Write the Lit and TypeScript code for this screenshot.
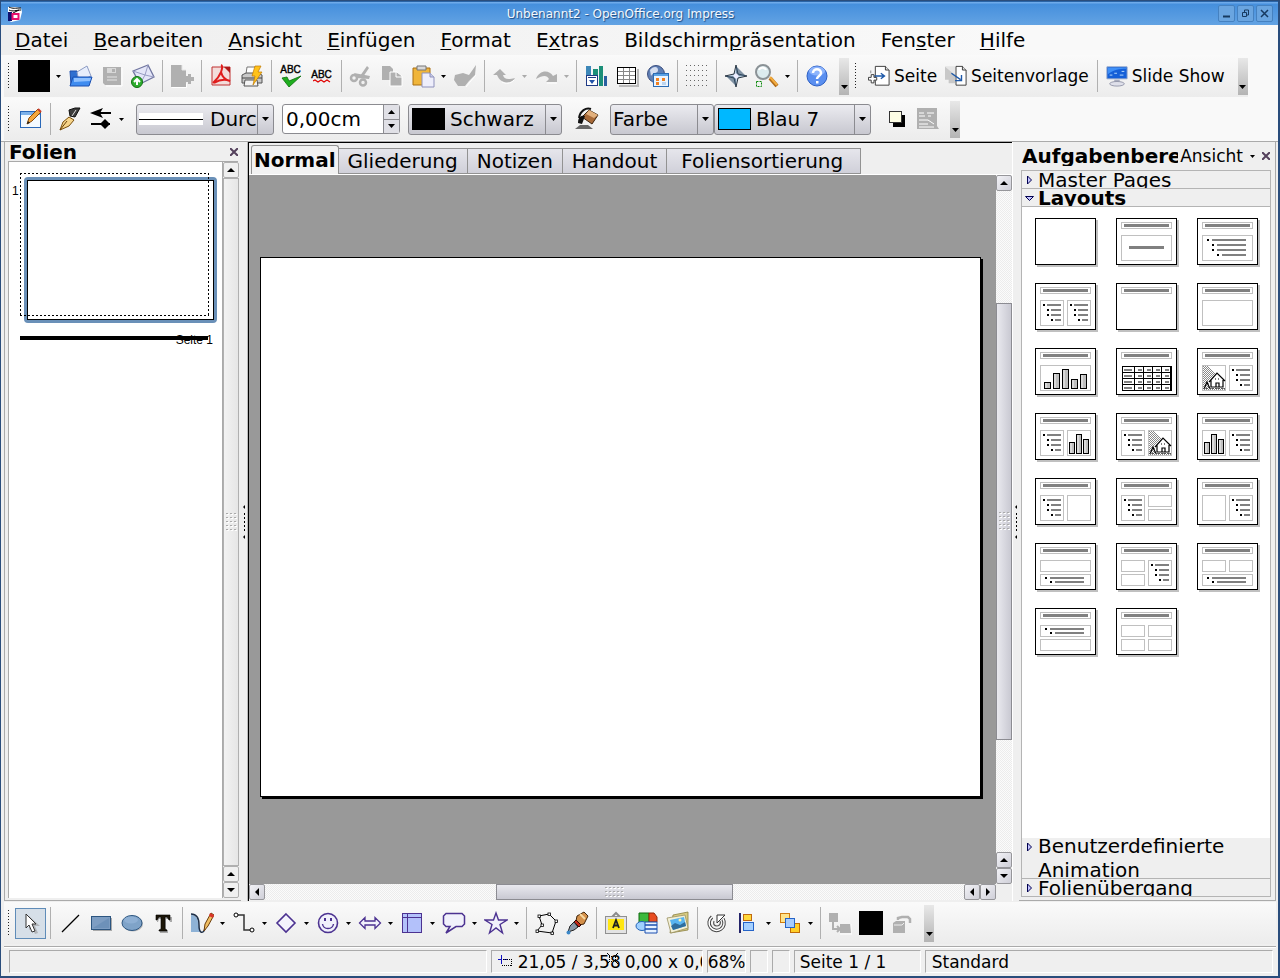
import { LitElement, html, svg, css, nothing, TemplateResult } from "lit";
import { customElement, property } from "lit/decorators.js";
import { classMap } from "lit/directives/class-map.js";

/* ---------- icon artwork, 24 x 24 grid ---------- */
const GREY = "#b0b0b0";
const VIOLET = "#4c3291";
const icons: Record<string, TemplateResult> = {
  open: svg`<path d="M1 7h7l2 2h6v12H2z" fill="#2f6fd0" stroke="#1d4fae"/><path d="M8 8l10-6 4 10-12 6z" fill="#e8eefc" stroke="#8d9cc4"/><path d="M4 13h19l-3 9H1z" fill="#3f8cf0" stroke="#1b4fb0"/><path d="M5 14h17l-1 3-16 1z" fill="#8fc0ff"/>`,
  save: svg`<path d="M3 3h18v18H5l-2-2z" fill="${GREY}"/><path d="M7 13h10M7 16h10" stroke="#e4e4e4" stroke-width="1"/><path d="M7 4h9v5H7z" fill="#d8d8d8"/><path d="M12 5h3v3h-3z" fill="${GREY}"/><path d="M22 4v18H6" fill="none" stroke="#fff"/>`,
  mail: svg`<path d="M2 7L17 1l6 12-14 7z" fill="#e4e6f8" stroke="#70759f" stroke-width="1.300"/><path d="M2 7l12 4 3-10M23 13l-9-2-5 9" fill="none" stroke="#9a9ec4"/><circle cx="6" cy="18" r="5.500" fill="#2fae2f" stroke="#137013"/><path d="M6 21v-6M3 18l3-3 3 3" fill="none" stroke="#fff" stroke-width="2"/>`,
  exportDoc: svg`<path d="M1 1h11v5h4v6h2v-2h3v3h3v4h-3v3h-3v-2h-2v5H1z" fill="${GREY}"/><path d="M12 1v5h4" fill="none" stroke="#e6e6e6"/><path d="M1.500 23.500h15v-4" fill="none" stroke="#fff"/>`,
  pdf: svg`<path d="M3 3h18v18H3z" fill="#f3dcda" stroke="#c03030"/><path d="M15 3h6v6z" fill="#b01818"/><path d="M12 1c3 1 0 11-8 18M12 8c1 4 4 8 9 9-5-2-11-1-16 2" fill="none" stroke="#e01c1c" stroke-width="2"/>`,
  print: svg`<path d="M7 3h10l-1 7H6z" fill="#fff" stroke="#777"/><path d="M2 11l4-2h12l4 2v8H2z" fill="#c9c9c9" stroke="#555"/><path d="M2 14h20" stroke="#444"/><path d="M5 16h12l1 6H4z" fill="#f5f5f5" stroke="#555"/><path d="M15 2h6l-3 6h4l-9 13 2-9h-3z" fill="#ffc21a" stroke="#c07800" stroke-width=".7"/>`,
  cut: svg`<path d="M18 2l2 2-6 9-3-1zM5 9l16 3-1 3-12-1z" fill="${GREY}"/><circle cx="5" cy="14" r="3" fill="none" stroke="${GREY}" stroke-width="2.500"/><circle cx="14" cy="18.500" r="3" fill="none" stroke="${GREY}" stroke-width="2.500"/>`,
  copy: svg`<path d="M2 2h8l3 3v11H2z" fill="${GREY}"/><path d="M10 8h7l5 4v10H10z" fill="${GREY}" stroke="#fff"/><path d="M16 8v5h6" fill="none" stroke="#fff"/>`,
  paste: svg`<path d="M2 4h17v17H2z" fill="#f0b53a" stroke="#a96f12"/><path d="M6 2h9v4H6z" fill="#d8d8d8" stroke="#777"/><path d="M11 9h8l4 4v10H11z" fill="#eeeefb" stroke="#8f92bc"/><path d="M19 9v4h4" fill="#c9cbe8" stroke="#8f92bc"/>`,
  brush: svg`<path d="M23 1l-1 10-6 6-4 5H5l-4-6 1-5 8-2 6 2z" fill="${GREY}"/><path d="M23 11l-6 7-4 5" fill="none" stroke="#fff"/>`,
  undo: svg`<path d="M1 11l7-6 6 6h-3c1 4 4 5 12 3-3 6-14 7-18-3z" fill="${GREY}"/><path d="M22 16c-3 4-9 4-12 2" fill="none" stroke="#fff"/>`,
  redo: svg`<path d="M23 18h-11l3-3c-2-4-6-4-13 0 3-9 13-10 17-3l4-2z" fill="${GREY}"/><path d="M23 19H13" stroke="#fff"/>`,
  chart: svg`<path d="M2 2h5v15H2z" fill="#3d87b8"/><path d="M9 5h5v9H9zM15 2h4v20h-4z" fill="#1b8f78"/><path d="M20 12h3v10h-3z" fill="#2a5fa0"/><rect x="2.500" y="11.500" width="11" height="10" fill="#fff" stroke="#1f3a86"/><path d="M4 13.500h8" stroke="#1f3a86"/><path d="M5 16h6l-3 4z" fill="#2353a8"/>`,
  table: svg`<path d="M4 22h19V5" fill="none" stroke="#bbb" stroke-width="2"/><rect x="2.500" y="3.500" width="18" height="16" fill="#fff" stroke="#000"/><path d="M3 7.500h17M3 11.500h17M3 15.500h17M8.500 4v15M14.500 4v15" stroke="#888"/>`,
  globe: svg`<circle cx="10" cy="10" r="8.500" fill="#5f7fb4" stroke="#3d5080"/><path d="M4 6c3-4 8-4 8 0s-5 2-7 6z" fill="#d5def0"/><rect x="7.500" y="9.500" width="15" height="13" fill="#eaf4ff" stroke="#2b6cb4"/><path d="M8 10h14v2H8z" fill="#5ba2e4"/><path d="M10 14h3v3h-3zM16 14h3v3h-3zM10 18h3v3h-3z" fill="#f08020"/><path d="M16 18h4v3h-4z" fill="#bcd4ee"/>`,
  dots: svg`${[1, 6, 11, 16, 21].map((y) => svg`<path d="M1 ${y + 0.5}h23" stroke="#666" stroke-dasharray="1 3"/>`)}`,
  compass: svg`<path d="M12 1l2 9 9 2-9 2-2 9-2-9-9-2 9-2z" fill="#c2d5e6" stroke="#28333f"/><path d="M12 2v10h10zM12 22V12H2z" fill="#34526e" opacity=".6"/><path d="M12 9l3 3-3 3-3-3z" fill="#eef"/>`,
  zoom: svg`<circle cx="8" cy="8" r="7" fill="#dcebee" stroke="#8b9296" stroke-width="2"/><path d="M4 6c1-3 6-3 7 0" stroke="#fff" stroke-width="2" fill="none"/><path d="M15 14l7 8" stroke="#b06a18" stroke-width="4"/><path d="M15 13l7 8" stroke="#f3ac3e" stroke-width="2"/><path d="M1.500 17.500h5v5h-5z" fill="none" stroke="#0a8a0a" stroke-dasharray="2 1"/>`,
  help: svg`<circle cx="12" cy="12" r="10" fill="#5a8ff0" stroke="#2c5fc4"/><ellipse cx="12" cy="7" rx="8" ry="4.500" fill="#8db4fc"/><path d="M8 9c0-5 8-5 8 0 0 3-4 3-4 6" fill="none" stroke="#fff" stroke-width="2.500"/><path d="M11 17h2.500v2.500H11z" fill="#fff"/>`,
  page: svg`<path d="M8 1.500h11l4 4V22H8z" fill="#fff" stroke="#333"/><path d="M19 1.500v4h4" fill="#ddd" stroke="#333"/><path d="M7 12h10M14 9l4 3-4 3" fill="none" stroke="#1d58a8" stroke-width="1.500"/><path d="M0.500 13.500h3v-3h3v3h3v3h-3v3h-3v-3h-3z" fill="#fff" stroke="#333"/><path d="M3 6v3" stroke="#888"/>`,
  pageMaster: svg`<path d="M0 2h11v18H4V16H0z" fill="#c8c8c8"/><path d="M0 2l11 9V2z" fill="#e6e6e6"/><path d="M12 1.500h7l4 4V22H12z" fill="#fff" stroke="#333"/><path d="M19 1.500v4h4" fill="#ddd" stroke="#333"/><path d="M7 9l10 7M18 11v6h-7" fill="none" stroke="#1d58a8" stroke-width="1.500"/>`,
  screen: svg`<path d="M1 2h22v13H1z" fill="#1560d8" stroke="#8aa0c8"/><path d="M2 10c6-5 13-6 20-6v-1H2z" fill="#3f90f8"/><path d="M4 11h3M9 9h3M15 11h4M17 7h3" stroke="#bfe0ff"/><path d="M9 16h6v3H9z" fill="#a8acbe"/><ellipse cx="12" cy="20.500" rx="8" ry="2.500" fill="#dfe0ea" stroke="#9295a8"/>`,
  edit: svg`<rect x="1.500" y="4.500" width="20" height="16" fill="#f4faff" stroke="#2a68b8"/><path d="M2 5h19v3H2z" fill="#7db2ea"/><path d="M8 17l2-6 9-9 3 3-9 9z" fill="#f5a83c" stroke="#8a4a08"/><path d="M8 17l1-3 2 2z" fill="#222"/><path d="M19 2l3 3" stroke="#c83c2c" stroke-width="2"/>`,
  pen: svg`<path d="M11 3l6-2h5l-5 9-5-1z" fill="#3c3c3c" stroke="#111"/><path d="M18 3l-4 6" stroke="#ddd"/><path d="M11 10l5 3-5 6-9 4 3-8z" fill="#f6d48a" stroke="#7a500e"/><path d="M2 23l7-9" stroke="#6a4208"/>`,
  ends: svg`<path d="M8 6h14M2 17h19" stroke="#000" stroke-width="2"/><path d="M1 6l13-5-3 5 3 5z" fill="#000"/><path d="M11 17l5-5 5 5-5 5z" fill="#000"/>`,
  bucket: svg`<path d="M7 10l7-7 9 5-6 9z" fill="#a86a38" stroke="#3a220c"/><path d="M14 3l9 5-4 3-8-4z" fill="#e2b07c"/><path d="M4 11c1-7 7-11 12-9" fill="none" stroke="#111" stroke-width="2"/><path d="M3 16c0-6 3-8 7-7l-3 8z" fill="#111"/><path d="M0 22l5-4h8l5 4z" fill="#666"/>`,
  shadow: svg`<path d="M8 8h12v12H8z" fill="#000"/><rect x="4.500" y="4.500" width="12" height="11" fill="#fdfde4" stroke="#333"/>`,
  effects: svg`<path d="M1 1h20v18l2 3H1z" fill="${GREY}"/><path d="M3 6h5M11 6h7M3 9h6M12 9h3M3 13h9l6 4M3 17h9M3 20h15" stroke="#fff" fill="none"/>`,
  pointer: svg`<path d="M8 3v14l3-3 3 7 3-1-3-7h5z" transform="translate(2 2)" fill="#999" opacity=".6"/><path d="M7 3v14l3-3 3 7 3-1-3-7h4z" fill="#fff" stroke="#333"/>`,
  line: svg`<path d="M4 21L21 4" stroke="#000" stroke-width="1.200"/>`,
  rect: svg`<path d="M4 7h19v13H4z" fill="#aaa"/><rect x="2.500" y="5.500" width="19" height="13" fill="#7d9dc2" stroke="#2c5580"/><path d="M4 17L20 7v10z" fill="#6288b2" opacity=".6"/>`,
  ellipse: svg`<ellipse cx="13" cy="13" rx="10" ry="7.500" fill="#bbb"/><ellipse cx="12" cy="12" rx="10" ry="7.500" fill="#7fa3c8" stroke="#2c5580"/><ellipse cx="11" cy="9" rx="7" ry="3.500" fill="#8fb0d4"/>`,
  textTool: svg`<path d="M6 6h15v5h-2l-1-3h-3v11l2 1v2H9v-2l2-1V8H8l-1 3H6z" fill="#aaa"/><path d="M5 4h14v5h-1l-2-3h-2v12l2 1v1H8v-1l2-1V6H8L6 9H5z" fill="#1c1608" stroke="#000" stroke-width=".6"/>`,
  curve: svg`<path d="M1 4c7 0 7 7 8 12l1 5H1z" fill="#8eb2d6"/><path d="M1 3c6 0 8 5 8 11 0 9 4 9 6 4" fill="none" stroke="#1e2f48" stroke-width="1.500"/><path d="M14 20l1-7 6-11 3 2-6 11z" fill="#f0be62" stroke="#6b3d0c"/><path d="M20 2l4 2-1 3-4-2z" fill="#d8352a"/>`,
  connector: svg`<path d="M6 4h6v15h6" fill="none" stroke="#333" stroke-width="1.500"/><circle cx="4" cy="4" r="2" fill="#fff" stroke="#000"/><circle cx="20" cy="19" r="2" fill="#fff" stroke="#000"/>`,
  diamond: svg`<path d="M12 3l9 9-9 9-9-9z" fill="#f4f4fc" stroke="${VIOLET}" stroke-width="1.600"/>`,
  smiley: svg`<circle cx="12" cy="12" r="9.500" fill="#f1f1fb" stroke="${VIOLET}" stroke-width="1.600"/><path d="M8 7h2v3H8zM14 7h2v3h-2z" fill="${VIOLET}"/><path d="M6.500 13c1 6 10 6 11 0" fill="none" stroke="${VIOLET}" stroke-width="1.400"/>`,
  blockArrow: svg`<path d="M1.500 12L7 6.500V10h10V6.500l5.500 5.500-5.500 5.500V14H7v3.500z" fill="#f1f1fb" stroke="${VIOLET}" stroke-width="1.300"/>`,
  flow: svg`<rect x="2.500" y="2.500" width="19" height="19" fill="#b3c1fa" stroke="${VIOLET}"/><path d="M7.500 2v20M2 6.500h20" stroke="${VIOLET}"/>`,
  callout: svg`<path d="M4 2.500h16l2.500 2.500v8L20 15.500h-6L4 22l4-6.500H4L1.500 13V5z" fill="#f1f1fb" stroke="${VIOLET}" stroke-width="1.500"/>`,
  star: svg`<path d="M12 2l2.500 7H23l-7 4.500L18.500 22 12 17l-6.500 5L8 13.500 1 9h8.500z" fill="#f1f1fb" stroke="${VIOLET}" stroke-width="1.400"/>`,
  points: svg`<path d="M5 5l10-2 7 7-4 12-15-2 5-6z" fill="none" stroke="#000"/>${[[5, 5], [15, 3], [22, 10], [18, 22], [3, 20], [8, 14]].map(([x, y]) => svg`<rect x="${x - 1}" y="${y - 1}" width="2.500" height="2.500" fill="#fff" stroke="#000" stroke-width=".8"/>`)}`,
  nib: svg`<path d="M12 5l7-4 4 4-4 8-5 1-3-4z" fill="#d4904a" stroke="#42260a"/><path d="M15 3l5 5" stroke="#f7d9a0" stroke-width="2"/><path d="M11 9l5 5-2 2-5-5z" fill="#c02818" stroke="#300"/><path d="M9 11l4 5-4 3-6 2 2-6z" fill="#8a98a8" stroke="#222"/><circle cx="3.500" cy="21.500" r="2" fill="#3c88c8"/>`,
  fontwork: svg`<path d="M7 7l5-5 5 5" fill="none" stroke="#8c8c8c" stroke-width="2"/><rect x="1.500" y="5.500" width="21" height="17" fill="#e3e3e3" stroke="#909090"/><path d="M4 8h16v11H4z" fill="#ffe612"/><path d="M9 17l3-8 3 8M10 14.500h4" fill="none" stroke="#222" stroke-width="1.800"/>`,
  gallery: svg`<path d="M4 2h10v10H4z" fill="#3cb83c" stroke="#0e6a0e"/><path d="M14 2h5l3 4v5h-8z" fill="#e84c20" stroke="#902808"/><ellipse cx="7" cy="15" rx="6" ry="4.500" fill="#9fd0ff" stroke="#2463b8"/><path d="M10 11h12v11H10z" fill="#e7f2ff" stroke="#1b4fb0"/><path d="M10 14h12M10 18h12" stroke="#1b4fb0" stroke-width="1.500"/>`,
  image: svg`<path d="M7 4L22 1v18L4 22z" fill="#d8cb84" stroke="#8b8040" stroke-width=".8"/><path d="M1 7l18-3 3 13-17 5z" fill="#f3f0d6" stroke="#999060" stroke-width=".8"/><path d="M4 9l14-3 2 9-13 4z" fill="#58b4f0"/><path d="M5 15l4-3 5 2 5-3 1 4-13 4z" fill="#2f6d9c"/><circle cx="14" cy="9" r="1.500" fill="#fff4a8"/>`,
  rotate: svg`<path d="M7 6a7.500 7.500 0 1 0 11 2" fill="none" stroke="#444" stroke-width="3.500"/><path d="M7 6a7.500 7.500 0 1 0 11 2" fill="none" stroke="#fff" stroke-width="1.500"/><path d="M9 10c-1 3 0 5 3 5s4-3 3-5" fill="none" stroke="#555" stroke-width="1.200"/><path d="M12 12V4h8z" fill="#fff" stroke="#333"/>`,
  align: svg`<path d="M4 2v20" stroke="#24246a" stroke-width="2"/><rect x="7.500" y="3.500" width="8" height="6" fill="#ffd83a" stroke="#c06810"/><rect x="7.500" y="11.500" width="10" height="8" fill="#a5d0ff" stroke="#2463c8"/>`,
  arrange: svg`<rect x="2.500" y="2.500" width="9" height="9" fill="#ffe38a" stroke="#d07c10"/><rect x="12.500" y="12.500" width="9" height="9" fill="#ffcf28" stroke="#c06c08"/><rect x="7.500" y="7.500" width="9" height="9" fill="#a5ccff" stroke="#2463c8"/>`,
  relation: svg`<path d="M1 2h9v9H1zM12 13h10l1 9H12z" fill="${GREY}"/><path d="M5 11v7h7M9 15l3 3-3 3" stroke="${GREY}" stroke-width="2" fill="none"/><path d="M12 23h12V13" stroke="#fff" fill="none"/>`,
  extrude: svg`<path d="M3 12l3-2h9v12H3z" fill="${GREY}"/><path d="M8 9V7l4-1h6l2 2v4" fill="none" stroke="${GREY}" stroke-width="2.500"/><path d="M4 14h8l2-2" stroke="#eee" fill="none"/>`,
};

type Item = string | { icon: string; label: string; drop?: boolean; off?: boolean; on?: boolean };
const t = (icon: string, label: string, extra: object = {}) => ({ icon, label, ...extra });
const d = { drop: true };

const STANDARD: Item[] = [
  t("black", "Neu", d), t("open", "Öffnen"), t("save", "Speichern", { off: true }), t("mail", "Als E-Mail senden"), "|",
  t("exportDoc", "Datei bearbeiten", { off: true }), "|",
  t("pdf", "Als PDF exportieren"), t("print", "Drucken"), "|",
  t("abcCheck", "Rechtschreibprüfung"), t("abcAuto", "Automatische Prüfung"), "|",
  t("cut", "Ausschneiden", { off: true }), t("copy", "Kopieren", { off: true }), t("paste", "Einfügen", d), t("brush", "Format übertragen", { off: true }), "|",
  t("undo", "Rückgängig", { drop: true, off: true }), t("redo", "Wiederherstellen", { drop: true, off: true }), "|",
  t("chart", "Diagramm"), t("table", "Tabelle"), t("globe", "Hyperlink"), "|",
  t("dots", "Raster"), "|",
  t("compass", "Navigator"), t("zoom", "Maßstab", d), "|",
  t("help", "Hilfe"),
];

const DRAWING: Item[] = [
  t("pointer", "Auswahl", { on: true }), "|",
  t("line", "Linie"), t("rect", "Rechteck"), t("ellipse", "Ellipse"), t("textTool", "Text"), "|",
  t("curve", "Kurve", d), t("connector", "Verbinder", d), t("diamond", "Standardformen", d), t("smiley", "Symbolformen", d),
  t("blockArrow", "Blockpfeile", d), t("flow", "Flussdiagramme", d), t("callout", "Legenden", d), t("star", "Sterne", d), "|",
  t("points", "Punkte"), t("nib", "Klebepunkte"), "|",
  t("fontwork", "Fontwork"), t("gallery", "Gallery"), t("image", "Bild"), "|",
  t("rotate", "Drehen"), t("align", "Ausrichtung", d), t("arrange", "Anordnung", d), "|",
  t("relation", "Interaktion", { off: true }), t("black24", "Animation"), t("extrude", "Extrusion", { off: true }),
];

const shared = css`
  * { box-sizing: border-box; }
  button {
    display: flex; align-items: center; justify-content: center;
    margin: 0; padding: 0; border: 0; background: none; color: inherit; font: inherit;
  }
  svg { display: block; flex: none; }
`;

/* ---------- toolbar pieces ---------- */
@customElement("tool-strip")
class ToolStrip extends LitElement {
  @property({ attribute: false }) items: Item[] = [];
  static styles = [shared, css`
    :host { display: flex; align-items: center; flex: none; }
    .tool { width: 31px; height: 31px; }
    .tool.wide { width: 36px; }
    .tool.on { border: 1px solid #5f8cb8; background: #d6dfe8; }
    .drop { width: 11px; height: 31px; }
    .drop.wide { width: 13px; }
    .sep { width: 8px; height: 32px; background: linear-gradient(#b0b0b0, #b0b0b0) 4px 0 / 1px 100% no-repeat; }
    .black { width: 32px; height: 32px; background: #000; }
    .black.small { width: 24px; height: 24px; }
    .abc { display: flex; flex-direction: column; align-items: center; font: 10px/9px "Liberation Sans", sans-serif; color: #000; -webkit-text-stroke: 0.4px #000; }
  `];
  art(name: string) {
    if (name === "black") return html`<span class="black"></span>`;
    if (name === "black24") return html`<span class="black small"></span>`;
    if (name === "abcCheck")
      return html`<span class="abc">ABC<svg width="22" height="13"><path d="M2 4l5-1 2 4 12-5L9 13z" fill="#1fae1f" stroke="#0a6e0a" stroke-width=".8"/></svg></span>`;
    if (name === "abcAuto")
      return html`<span class="abc">ABC<svg width="18" height="4"><path d="M0 2l2-1 3 2 3-2 3 2 3-2 3 2" fill="none" stroke="#e00000" stroke-width="1.200"/></svg></span>`;
    return html`<svg width="24" height="24" viewBox="0 0 24 24">${icons[name]}</svg>`;
  }
  render() {
    return this.items.map((it) => {
      if (typeof it === "string") return html`<span class="sep"></span>`;
      const wide = it.icon === "black";
      return html`<button class=${classMap({ tool: true, wide, on: !!it.on })} aria-label=${it.label} ?disabled=${!!it.off}>${this.art(it.icon)}</button>
        ${it.drop
          ? html`<button class=${classMap({ drop: true, wide })} aria-label="${it.label}: Auswahl" ?disabled=${!!it.off}>
              <svg width="5" height="3"><path d="M0 0h5L2.500 3z" fill=${it.off ? "#aaa" : "#000"} /></svg></button>`
          : nothing}`;
    });
  }
}

/* ---------- scroll bar ---------- */
@customElement("scroll-track")
class ScrollTrack extends LitElement {
  @property() kind = "vertical";
  @property({ type: Number }) before = 0;
  @property({ type: Number }) size = 100;
  @property({ type: Boolean }) flat = false;
  static styles = [shared, css`
    :host { display: flex; flex: none; }
    .bar { display: flex; flex: 1; min-width: 0; min-height: 0; background: #f4f4f4; }
    .vertical { flex-direction: column; width: 16px; }
    .horizontal { height: 16px; }
    .step { flex: none; width: 16px; height: 16px; border: 1px solid #96969a; border-radius: 2px; background: linear-gradient(135deg, #f2f2f6, #cfcfd8); }
    .flat .step { border-color: #b0b0b0; background: #f0f0f0; }
    .track { flex: 1; display: flex; min-width: 0; min-height: 0; background: repeating-conic-gradient(#ececec 0 25%, #fbfbfb 0 50%) 0 0 / 2px 2px; }
    .vertical .track { flex-direction: column; }
    .thumb { flex: none; display: flex; align-items: center; justify-content: center; border: 1px solid #8c8c92; }
    .vertical .thumb { background: linear-gradient(90deg, #e9e9ef, #c9c9d2); }
    .horizontal .thumb { background: linear-gradient(#e9e9ef, #c9c9d2); }
    .flat .thumb { border-color: #b0b0b0; background: linear-gradient(90deg, #f2f2f2, #e6e6e6); }
  `];
  step(path: string, label: string) {
    return html`<button class="step" aria-label=${label}><svg width="8" height="8" viewBox="0 0 8 8"><path d=${path} fill="#000" /></svg></button>`;
  }
  knurl(v: boolean) {
    const w = v ? 11 : 19;
    const rows = v ? [0, 4, 8, 12, 16] : [0, 4, 8];
    return html`<svg width=${w} height=${v ? 18 : 10}>
      ${rows.map((y) => svg`<path d="M0 ${y + 0.5}h${w}" stroke="#aaa" stroke-dasharray="2 2"/><path d="M1 ${y + 1.5}h${w - 1}" stroke="#fff" stroke-dasharray="2 2"/>`)}
    </svg>`;
  }
  render() {
    const v = this.kind === "vertical";
    const back = v ? this.step("M0 6h8L4 2z", "Nach oben") : this.step("M6 0v8L2 4z", "Nach links");
    const fwd = v ? this.step("M0 2h8L4 6z", "Nach unten") : this.step("M2 0v8l4-4z", "Nach rechts");
    const side = v ? "height" : "width";
    return html`<div class=${classMap({ bar: true, [this.kind]: true, flat: this.flat })}>
      ${back}
      <div class="track">
        <span style="${side}:${this.before}%"></span>
        <div class="thumb" style="${side}:${this.size}%">${this.knurl(v)}</div>
      </div>
      ${back}${fwd}
    </div>`;
  }
}

/* ---------- layout previews ---------- */
const box = (x: number, y: number, w: number, h: number) =>
  svg`<rect x="${x + 0.5}" y="${y + 0.5}" width="${w - 1}" height="${h - 1}" fill="#fff" stroke="#c0c0c0"/>`;
const head = () => svg`${box(5, 4, 51, 7)}<rect x="8" y="6" width="45" height="3" fill="#808080"/>`;
const bullets = (rows: number[][], end: number, y: number, pitch: number) =>
  rows.map(([b, s], i) => svg`<rect x="${b}" y="${y + i * pitch}" width="2" height="2" fill="#000"/><rect x="${s}" y="${y + i * pitch}" width="${end - s}" height="2" fill="#808080"/>`);
const listHalf = (x: number) => svg`${box(x, 17, 24, 26)}${bullets([[x + 3, x + 7], [x + 7, x + 11], [x + 7, x + 11], [x + 11, x + 15]], x + 21, 21, 5)}`;
const wideList = (y: number) => svg`${box(5, y, 51, 12)}${bullets([[10, 15], [15, 20]], 49, y + 3, 4)}`;
const bars = (list: number[][], w: number) =>
  list.map(([x, y]) => svg`<rect x="${x + 0.5}" y="${y + 0.5}" width="${w}" height="${40 - y}" fill="#c0c0c0" stroke="#000"/><path d="M${x + 2} ${y + 1}v${39 - y}" stroke="#f4f4f4"/>`);
const barsHalf = (x: number) => svg`${box(x, 17, 24, 26)}${bars([[x + 2, 29], [x + 9, 21], [x + 16, 26]], 5)}`;
const house = (x: number) => svg`${box(x, 17, 24, 26)}
  <g transform="translate(${x + 1} 18)">
    ${Array.from({ length: 24 }, (_, r) => svg`<path d="M${r % 2} ${r + 0.5}h${Math.min(22, 5 + r)}" stroke="#888" stroke-dasharray="1 1"/>`)}
    <path d="M5 15l9-8 8 8v7H7z" fill="#fff"/>
    <path d="M6 16l8-9 8 8M8 14v7h12v-7M13 21v-4h3v4M1 23l3-7 3 7" fill="none" stroke="#000" stroke-width="1.200"/>
    <path d="M12 13h1M15 13h1" stroke="#000"/>
    <path d="M0 22.500h22" stroke="#555" stroke-dasharray="2 1"/>
  </g>`;
const grid = () => svg`<rect x="6" y="18" width="50" height="25" fill="#000"/>
  ${[19, 25, 31, 37].map((y) => [7, 19, 28, 37, 46].map((x, i) => svg`<rect x="${x}" y="${y}" width="${i ? 8 : 11}" height="5" fill="#fff"/><path d="M${x + (i ? 3 : 1)} ${y + 3}h${i ? 4 : 8}" stroke="#808080" stroke-width="2"/>`))}`;
const q = (x: number, y: number) => box(x, y, 24, 12);

const LAYOUTS: [string, unknown][] = [
  ["Leere Folie", nothing],
  ["Titelfolie", svg`${head()}${box(5, 17, 51, 26)}<rect x="13" y="28" width="35" height="3" fill="#808080"/>`],
  ["Titel, Text", svg`${head()}${box(5, 17, 51, 26)}${bullets([[10, 15], [15, 20], [15, 20], [20, 25]], 49, 21, 5)}`],
  ["Titel, 2 Texte", svg`${head()}${listHalf(5)}${listHalf(32)}`],
  ["Nur Titel", head()],
  ["Titel, Objekt", svg`${head()}${box(5, 17, 51, 26)}`],
  ["Titel, Diagramm", svg`${head()}${box(5, 17, 51, 26)}${bars([[9, 34], [18, 25], [27, 21], [36, 31], [45, 26]], 6)}`],
  ["Titel, Tabelle", svg`${head()}${grid()}`],
  ["Titel, Bild, Text", svg`${head()}${house(5)}${listHalf(32)}`],
  ["Titel, Text, Diagramm", svg`${head()}${listHalf(5)}${barsHalf(32)}`],
  ["Titel, Text, Bild", svg`${head()}${listHalf(5)}${house(32)}`],
  ["Titel, Diagramm, Text", svg`${head()}${barsHalf(5)}${listHalf(32)}`],
  ["Titel, Text, Objekt", svg`${head()}${listHalf(5)}${box(32, 17, 24, 26)}`],
  ["Titel, Text, 2 Objekte", svg`${head()}${listHalf(5)}${q(32, 17)}${q(32, 31)}`],
  ["Titel, Objekt, Text", svg`${head()}${box(5, 17, 24, 26)}${listHalf(32)}`],
  ["Titel, Objekt über Text", svg`${head()}${box(5, 17, 51, 12)}${wideList(31)}`],
  ["Titel, 2 Objekte, Text", svg`${head()}${q(5, 17)}${q(5, 31)}${listHalf(32)}`],
  ["Titel, 2 Objekte über Text", svg`${head()}${q(5, 17)}${q(32, 17)}${wideList(31)}`],
  ["Titel, Text über Objekt", svg`${head()}${wideList(17)}${box(5, 31, 51, 12)}`],
  ["Titel, 4 Objekte", svg`${head()}${q(5, 17)}${q(32, 17)}${q(5, 31)}${q(32, 31)}`],
];

const MENU: [string, string, string][] = [
  ["", "D", "atei"], ["", "B", "earbeiten"], ["", "A", "nsicht"], ["", "E", "infügen"], ["", "F", "ormat"],
  ["E", "x", "tras"], ["Bildschirm", "p", "räsentation"], ["Fen", "s", "ter"], ["", "H", "ilfe"],
];

const cross = html`<svg width="8" height="8" viewBox="0 0 8 8"><path d="M0 0l8 8M8 0L0 8" stroke="#54415c" stroke-width="2" /></svg>`;
const down = html`<svg width="7" height="4"><path d="M0 0h7L3.500 4z" /></svg>`;

@customElement("app-root")
class AppRoot extends LitElement {
  static styles = [shared, css`
    :host {
      display: flex; flex-direction: column; height: 100vh; overflow: hidden; box-sizing: border-box;
      border: solid #2a4d7c; border-width: 1px 2px 2px 1px; background: #efefef; color: #000;
      font: 20px/24px "DejaVu Sans", sans-serif; white-space: nowrap;
    }
    .title { flex: none; height: 24px; display: flex; align-items: center; padding: 0 5px 0 6px; gap: 2px; border-top: 1px solid #2a65a8; background: linear-gradient(#6eaaea 0 1px, #458fdd 2px, #63a3e3); }
    .title h1 { flex: 1; margin: 0; text-align: center; font: 12px/16px "DejaVu Sans", sans-serif; color: #f4f8fc; text-shadow: 1px 1px 1px #1c4a80; }
    .title button { width: 17px; height: 17px; border: 1px solid #4581c0; border-radius: 2px; background: #6aa5e0; }
    .menu { flex: none; display: flex; height: 30px; align-items: center; padding: 0 1px; background: linear-gradient(90deg, #eeeeee, #f9f9f9 80%); }
    .menu button { padding: 0 12px 0 13px; height: 30px; display: block; }
    .menu u { text-decoration-thickness: 1px; text-underline-offset: 2px; }
    .rows { flex: none; background: #f9f9f9; }
    .bar { display: flex; align-items: center; width: max-content; height: 42px; margin: 0 0 1px 3px; background: linear-gradient(#fafafa, #ececec); }
    .bar.draw { width: auto; margin: 1px 2px 2px 3px; flex: none; }
    .grip { flex: none; width: 12px; height: 26px; background: repeating-linear-gradient(#222 0 1px, transparent 1px 3px) 4px 0 / 1px 100% no-repeat; }
    .grip.slim { width: 11px; }
    .grip.pad { width: 15px; background-position-x: 6px; }
    .more { flex: none; width: 10px; height: 37px; margin-left: 7px; display: flex; align-items: flex-end; padding-bottom: 6px; background: linear-gradient(#e8e8e8, #b4b4b4); }
    .label + .more { margin-left: 9px; }
    .sep { flex: none; width: 9px; height: 32px; background: linear-gradient(#b0b0b0, #b0b0b0) 4px 0 / 1px 100% no-repeat; }
    .label { height: 31px; padding: 0 4px; gap: 4px; font-size: 17px; }
    .combo { flex: none; display: flex; align-items: center; height: 31px; border: 1px solid #8b8b90; border-radius: 3px; background: linear-gradient(#ebebf0, #c8c8d0); }
    .combo select { flex: 1; min-width: 0; height: 29px; padding: 0 0 0 2px; appearance: none; border: 0; background: none; color: #000; font: inherit; overflow: hidden; }
    .combo .arrow { flex: none; width: 16px; height: 29px; display: flex; align-items: center; justify-content: center; border-left: 1px solid #8b8b90; }
    .w1 { width: 138px; margin-left: 9px; } .w2 { width: 154px; margin-left: 8px; margin-right: 9px; } .w3 { width: 104px; margin-left: 8px; } .w4 { width: 157px; margin-right: 10px; }
    .swatch { flex: none; width: 33px; height: 22px; margin: 0 3px; border: 1px solid #000; }
    .swatch.black { background: #000; } .swatch.blue { background: #00b8ff; }
    .swatch.stroke { width: 64px; height: 12px; margin: 0 5px 0 2px; border: 0; background: linear-gradient(#000, #000) 0 6px / 100% 1px no-repeat, #fff; }
    .spin { flex: none; display: flex; width: 118px; height: 30px; margin-left: 8px; border: 1px solid #8b8b90; border-radius: 3px; background: #fff; }
    .spin input { flex: 1; min-width: 0; padding: 0 3px; border: 0; background: none; font: inherit; color: #000; }
    .spin div { flex: none; width: 16px; display: grid; border-left: 1px solid #8b8b90; background: #e0e0e6; }
    .spin button + button { border-top: 1px solid #8b8b90; }

    .main { flex: 1; min-height: 0; display: flex; border-top: 1px solid #aaa; }
    .slides { flex: none; width: 237px; margin-left: 3px; display: flex; flex-direction: column; border-left: 1px solid #aaa; border-bottom: 1px solid #aaa; }
    .slides header { display: flex; align-items: center; justify-content: space-between; height: 19px; padding: 0 3px 0 4px; }
    h2 { margin: 0; font: bold 20px/20px "DejaVu Sans", sans-serif; overflow: hidden; }
    .list { flex: 1; min-height: 0; display: flex; margin: 0 3px 2px 3px; border: solid #aaa; border-width: 1px 0 0 1px; background: #fff; }
    .sheet { position: relative; flex: 1; display: grid; grid-template-columns: 12px 193px; align-content: start; padding: 15px 0 0 3px; font: 12px/14px "Liberation Sans", sans-serif; }
    .sheet .num { padding-top: 7px; }
    .thumb { height: 146px; border: 3px solid #6a90b8; border-radius: 4px; background: #fff; }
    .thumb i { display: block; height: 140px; border: 1px solid #000; }
    .sheet .name { grid-column: 2; padding: 10px 4px 0 0; text-align: right; }
    .ghost { position: absolute; left: 11px; top: 11px; width: 189px; height: 143px;
      background: repeating-linear-gradient(90deg, #000 0 2px, transparent 2px 4px) 0 0 / 100% 1px no-repeat, repeating-linear-gradient(90deg, #000 0 2px, transparent 2px 4px) 0 100% / 100% 1px no-repeat,
        repeating-linear-gradient(#000 0 2px, transparent 2px 4px) 0 0 / 1px 100% no-repeat, repeating-linear-gradient(#000 0 2px, transparent 2px 4px) 100% 0 / 1px 100% no-repeat; }
    .drag { position: absolute; left: 11px; top: 174px; width: 188px; height: 4px; background: #000; }
    .list scroll-track { border: solid #aaa; border-width: 0 0 0 1px; margin-right: -1px; }
    .split { flex: none; width: 7px; display: flex; align-items: center; justify-content: center; border-right: 1px solid #bbb; }
    .split.right { border: 0; border-left: 1px solid #fff; }

    .work { flex: 1; min-width: 0; display: flex; flex-direction: column; border: solid #000; border-width: 1px 0 0 1px; }
    .tabs { flex: none; display: flex; align-items: flex-end; height: 32px; padding: 0 2px; border-bottom: 1px solid #fff; }
    .tabs button { height: 26px; padding: 0 9px; border: 1px solid #929292; border-left-width: 0; background: linear-gradient(#e6e6ec, #d0d0d9); }
    .tabs button.on { height: 29px; padding: 0 2px; border-left-width: 1px; border-bottom: 0; border-radius: 3px 3px 0 0; background: #f2f2f2; font-weight: bold; }
    .tabs button:last-child { padding: 0 17px 0 14px; }
    .view { flex: 1; min-height: 0; display: flex; }
    .desk { flex: 1; min-width: 0; display: flex; align-items: center; padding: 0 15px 5px 11px; background: #999; }
    .page { flex: 1; aspect-ratio: 4 / 3; border: 1px solid #000; background: #fff; box-shadow: 2px 2px 0 #000; }
    .foot { flex: none; display: flex; height: 17px; }
    .foot scroll-track { flex: 1; }
    .corner { width: 16px; }

    .tasks { flex: none; width: 257px; display: flex; flex-direction: column; padding: 0 4px 3px 2px; margin-right: 2px; border: solid #aaa; border-width: 0 1px 1px 0; }
    .tasks header { display: flex; align-items: center; height: 28px; padding: 0 1px; font-size: 17px; }
    .tasks h2 { flex: 1; min-width: 0; }
    .tasks header button { gap: 7px; margin-left: 2px; }
    .tasks header button + button { width: 8px; margin-left: 7px; }
    .panes { flex: 1; min-height: 0; display: flex; flex-direction: column; border: 1px solid #b4b4b4; background: #fff; }
    .pane { flex: none; width: 100%; justify-content: flex-start; align-items: flex-start; text-align: left; gap: 4px; padding: 0 3px; min-height: 18px; overflow: hidden; background: #efefef; border-bottom: 1px solid #b4b4b4; line-height: 18px; white-space: normal; }
    .pane svg { margin-top: 4px; }
    .pane span { height: 17px; }
    .pane.bold { font-weight: bold; }
    .pane.tall { line-height: 24px; } .pane.tall span { height: 44px; margin-top: -4px; }
    .pane.last { border-bottom: 0; min-height: 17px; }
    .layouts { flex: 1; display: grid; grid-template-columns: repeat(3, 63px); gap: 16px 18px; align-content: start; padding: 11px 13px; }

    .status { flex: none; display: flex; height: 30px; margin: 0 2px 0 3px; padding: 3px 3px 3px 5px; border-top: 1px solid #aaa; box-shadow: inset 0 1px #fff; gap: 4px; font-size: 17px; line-height: 22px; }
    .cell { position: relative; flex: none; display: flex; align-items: center; overflow: hidden; border: solid; border-width: 1px; border-color: #aaa #fff #fff #aaa; }
    .c1 { flex: 478 1 0; } .c2 { width: 212px; padding-left: 6px; gap: 6px; } .c3 { width: 39px; } .c4 { width: 18px; } .c5 { width: 127px; padding-left: 5px; } .c6 { flex: 342 1 0; padding-left: 6px; }
    .size-icon { position: absolute; left: 114px; top: 1px; }
    .pos { width: 101px; }
  `];

  combo(cls: string, label: string, value: string, swatch: string) {
    return html`<div class="combo ${cls}">
      ${swatch ? html`<span class="swatch ${swatch}"></span>` : nothing}
      <select aria-label=${label}><option>${value}</option></select>
      <span class="arrow">${down}</span>
    </div>`;
  }
  more() {
    return html`<button class="more" aria-label="Weitere Symbole">${down}</button>`;
  }
  labelled(icon: string, text: string) {
    return html`<button class="label"><svg width="22" height="24" viewBox="0 0 24 24">${icons[icon]}</svg>${text}</button>`;
  }
  pane(text: string, cls = "", open = false) {
    return html`<button class="pane ${cls}" aria-expanded=${open ? "true" : "false"}>
      <svg width="9" height="10" viewBox="0 0 9 10"><path d=${open ? "M.5 3.500h8L4.500 7.500z" : "M2.500 1v8l4-4z"} fill="#c4c4ff" stroke="#000050" /></svg>
      <span>${text}</span>
    </button>`;
  }
  splitDots() {
    return html`<svg width="4" height="34" viewBox="0 0 4 34"><path d="M3 0v4L1 2zM3 30v4l-2-2z" /><path d="M2.500 8v19" stroke="#000" stroke-dasharray="2 2" /></svg>`;
  }

  render() {
    return html`
      <div class="title">
        <svg width="16" height="16" viewBox="0 0 16 16">
          <path d="M1 1h8l5 1 1 4-2 8-9 2-3-3z" fill="#fff" /><path d="M1 6h4v9H1z" fill="#101070" /><path d="M2 1c4 2 6 1 12 1M2 4c4 2 7 0 12 0M6 7l6-3" fill="none" stroke="#000" />
          <rect x="5.500" y="8" width="6" height="5" fill="#fff" stroke="#e8106c" stroke-width="2" />
        </svg>
        <h1>Unbenannt2 - OpenOffice.org Impress</h1>
        <button aria-label="Minimieren"><svg width="9" height="9"><path d="M1 7.500h7" stroke="#173a60" stroke-width="2" /></svg></button>
        <button aria-label="Wiederherstellen"><svg width="9" height="9"><path d="M1.500 3.500h4v4h-4zM3.500 3V1h4v5H6" fill="none" stroke="#173a60" /></svg></button>
        <button aria-label="Schließen"><svg width="9" height="9"><path d="M1 1l7 7M8 1L1 8" stroke="#173a60" stroke-width="1.500" /></svg></button>
      </div>
      <nav class="menu">${MENU.map(([a, u, b]) => html`<button>${a}<u>${u}</u>${b}</button>`)}</nav>
      <div class="rows">
        <div class="bar">
          <span class="grip"></span>
          <tool-strip .items=${STANDARD}></tool-strip>
          ${this.more()}
          <span class="grip pad"></span>
          ${this.labelled("page", "Seite")}${this.labelled("pageMaster", "Seitenvorlage")}
          <span class="sep"></span>
          ${this.labelled("screen", "Slide Show")}${this.more()}
        </div>
        <div class="bar">
          <span class="grip slim"></span>
          <tool-strip .items=${[t("edit", "Stile und Vorlagen"), "|", t("pen", "Linie"), t("ends", "Linienende", d)]}></tool-strip>
          ${this.combo("w1", "Linienstil", "Durchgehend", "stroke")}
          <div class="spin">
            <input aria-label="Linienbreite" .value=${"0,00cm"} />
            <div><button aria-label="Mehr"><svg width="7" height="4"><path d="M0 4h7L3.500 0z" /></svg></button><button aria-label="Weniger">${down}</button></div>
          </div>
          ${this.combo("w2", "Linienfarbe", "Schwarz", "black")}
          <tool-strip .items=${[t("bucket", "Fläche")]}></tool-strip>
          ${this.combo("w3", "Füllart", "Farbe", "")}${this.combo("w4", "Füllfarbe", "Blau 7", "blue")}
          <tool-strip .items=${[t("shadow", "Schatten"), t("effects", "Effekte", { off: true })]}></tool-strip>
          ${this.more()}
        </div>
      </div>

      <div class="main">
        <section class="slides">
          <header><h2>Folien</h2><button aria-label="Folien schließen">${cross}</button></header>
          <div class="list">
            <div class="sheet">
              <span class="num">1</span>
              <div class="thumb"><i></i></div>
              <span class="name">Seite 1</span>
              <div class="ghost"></div>
              <div class="drag"></div>
            </div>
            <scroll-track kind="vertical" size="100" flat></scroll-track>
          </div>
        </section>
        <div class="split">${this.splitDots()}</div>
        <main class="work">
          <div class="tabs">
            <button class="on">Normal</button><button>Gliederung</button><button>Notizen</button><button>Handout</button><button>Foliensortierung</button>
          </div>
          <div class="view">
            <div class="desk"><div class="page"></div></div>
            <scroll-track kind="vertical" before="17" size="66"></scroll-track>
          </div>
          <div class="foot"><scroll-track kind="horizontal" before="33" size="34"></scroll-track><span class="corner"></span></div>
        </main>
        <div class="split right">${this.splitDots()}</div>
        <aside class="tasks">
          <header>
            <h2>Aufgabenbereich</h2>
            <button>Ansicht<svg width="5" height="3"><path d="M0 0h5L2.500 3z" /></svg></button>
            <button aria-label="Aufgabenbereich schließen">${cross}</button>
          </header>
          <div class="panes">
            ${this.pane("Master Pages")}${this.pane("Layouts", "bold", true)}
            <div class="layouts">
              ${LAYOUTS.map(([name, art]) => html`<button aria-label=${name}><svg width="63" height="49" viewBox="0 0 63 49">
                <rect x="2" y="2" width="61" height="47" fill="#c0c0c0" /><rect x=".5" y=".5" width="60" height="46" fill="#fff" stroke="#000" />${art}</svg></button>`)}
            </div>
            ${this.pane("Benutzerdefinierte Animation", "tall")}${this.pane("Folienübergang", "last")}
          </div>
        </aside>
      </div>

      <div class="bar draw"><span class="grip slim"></span><tool-strip .items=${DRAWING}></tool-strip>${this.more()}</div>

      <footer class="status">
        <span class="cell c1"></span>
        <span class="cell c2">
          <svg width="14" height="14" viewBox="0 0 14 14"><path d="M0 4.500h9M3.500 0v9" stroke="#1010c0" stroke-dasharray="4 1" /><path d="M4 10.500h10M13.500 4v7M5 4.500h9" stroke="#000" stroke-dasharray="1 1" /></svg>
          <span class="pos">21,05 / 3,58</span><span>0,00 x 0,00</span>
          <svg class="size-icon" width="13" height="13" viewBox="0 0 13 13"><path d="M1 1l3 3M12 1L9 4M1 12l3-3M12 12L9 9" stroke="#000" /><path d="M3 4.500h8M3 9.500h8M3.500 3v8M9.500 3v8" stroke="#000" stroke-dasharray="1 1" /></svg>
        </span>
        <span class="cell c3">68%</span><span class="cell c4"></span><span class="cell c4"></span>
        <span class="cell c5">Seite 1 / 1</span><span class="cell c6">Standard</span>
      </footer>
    `;
  }
}
